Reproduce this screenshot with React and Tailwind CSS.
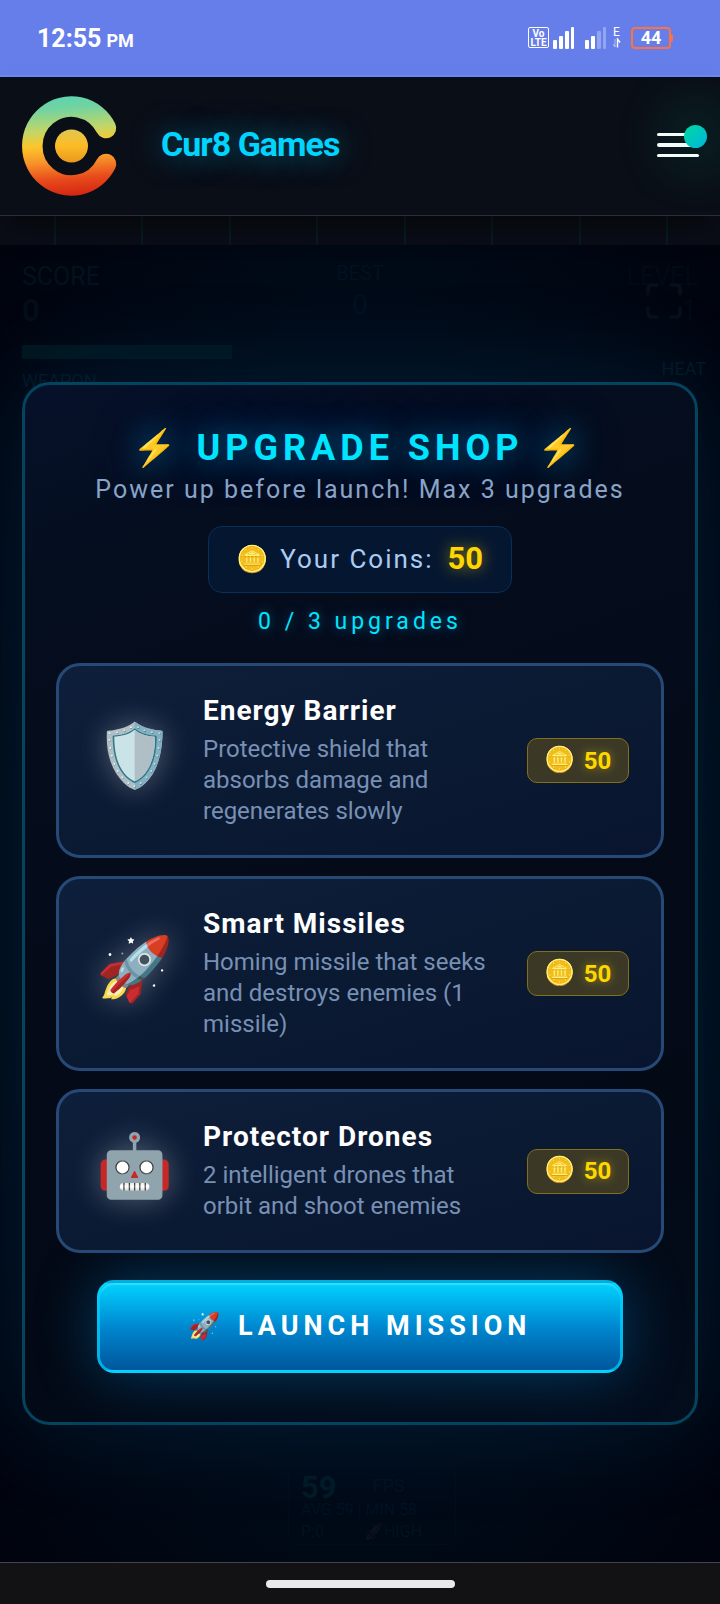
import React from "react";

const upgrades = [
  {
    icon: "🛡️",
    name: "Energy Barrier",
    description: "Protective shield that absorbs damage and regenerates slowly",
    cost: 50,
  },
  {
    icon: "🚀",
    name: "Smart Missiles",
    description: "Homing missile that seeks and destroys enemies (1 missile)",
    cost: 50,
  },
  {
    icon: "🤖",
    name: "Protector Drones",
    description: "2 intelligent drones that orbit and shoot enemies",
    cost: 50,
  },
];

function SignalBars({ strength }) {
  return (
    <svg width="22" height="22" viewBox="0 0 22 22" fill="#fff" aria-hidden="true">
      <rect x="0" y="13" width="4" height="9" rx="1" />
      <rect x="6" y="9" width="4" height="13" rx="1" />
      <rect x="12" y="4" width="4" height="18" rx="1" opacity={strength > 2 ? 1 : 0.3} />
      <rect x="18" y="0" width="3" height="22" rx="1" opacity={strength > 2 ? 1 : 0.3} />
    </svg>
  );
}

function StatusBar() {
  return (
    <div className="flex h-[77px] items-center justify-between border-b-2 border-[#6d88f2] bg-[#667eea] pr-[47px] pl-[37px] text-white">
      <div className="flex items-baseline gap-[5px] pt-[2px] font-bold">
        <span className="text-[25px] leading-8">12:55</span>
        <span className="text-lg">PM</span>
      </div>
      <div className="flex items-center">
        <div className="flex h-[21px] w-[21px] flex-col items-center justify-center rounded-[2px] border border-white text-[10px] leading-[9px] font-bold">
          <span>Vo</span>
          <span>LTE</span>
        </div>
        <div className="ml-1">
          <SignalBars strength={4} />
        </div>
        <div className="ml-[10px]">
          <SignalBars strength={2} />
        </div>
        <div className="ml-[5px] flex w-[9px] flex-col items-center">
          <span className="text-[12px] leading-[11px]">E</span>
          <svg width="9" height="10" viewBox="0 0 9 10" fill="none" stroke="#fff" aria-hidden="true">
            <path d="M3 1v8M1 6l2 3" opacity=".5" />
            <path d="M5.500 9.500V1l2.500 3.500" strokeWidth="1.400" />
          </svg>
        </div>
        <div className="ml-[10px] flex items-center">
          <div className="flex h-[22px] w-10 items-center justify-center rounded-[4px] border-2 border-[#ff7043] text-lg leading-5 font-bold">
            44
          </div>
          <div className="h-2 w-[2px] rounded-r bg-[#ff7043]" />
        </div>
      </div>
    </div>
  );
}

function Logo() {
  return (
    <svg width="100" height="104" viewBox="0 0 100 104" aria-label="Cur8 logo" role="img">
      <defs>
        <linearGradient id="ring" gradientUnits="userSpaceOnUse" x1="46" y1="2" x2="54" y2="102">
          <stop offset="0" stopColor="#5ed3b0" />
          <stop offset="0.120" stopColor="#72d3a0" />
          <stop offset="0.330" stopColor="#c3d667" />
          <stop offset="0.480" stopColor="#fcc62a" />
          <stop offset="0.640" stopColor="#f8932a" />
          <stop offset="0.820" stopColor="#e84b1c" />
          <stop offset="1" stopColor="#d42412" />
        </linearGradient>
        <linearGradient id="core" x1="0" y1="0" x2="0" y2="1">
          <stop offset="0" stopColor="#dfc850" />
          <stop offset="0.500" stopColor="#fdbb25" />
          <stop offset="1" stopColor="#e8981f" />
        </linearGradient>
      </defs>
      <path d="M84 34A39 39.500 0 1 0 84 70" fill="none" stroke="url(#ring)" strokeWidth="20.500" strokeLinecap="round" />
      <circle cx="49.500" cy="52" r="16.500" fill="url(#core)" />
    </svg>
  );
}

function Header() {
  return (
    <header className="relative z-10 flex h-[139px] items-center justify-between border-b border-[#2b2f35] bg-[#0a0e17] pr-[21px] pl-[22px] shadow-[0_16px_24px_-8px_rgba(0,0,0,0.5)]">
      <a href="#home" className="flex items-center gap-[39px]">
        <Logo />
        <span className="pb-1 text-[34px] leading-10 font-bold tracking-[-1px] text-[#00d4ff] [text-shadow:0_0_30px_rgba(0,212,255,0.5)]">
          Cur8 Games
        </span>
      </a>
      <button type="button" aria-label="Open menu" className="relative flex w-[42px] flex-col gap-[7px] pb-[2px]">
        <span className="h-[3px] w-full rounded bg-white" />
        <span className="h-1 w-full rounded bg-white" />
        <span className="h-[3px] w-full rounded bg-white" />
        <span className="absolute -top-2 -right-2 size-[23px] rounded-full bg-linear-to-br from-[#00d9a0] to-[#00b4d8] shadow-[0_0_60px_10px_rgba(0,217,165,0.3)]" />
      </button>
    </header>
  );
}

function GridStrip() {
  return (
    <div className="flex h-[29px] justify-between bg-[#0a0d16] pr-[52px] pl-[54px]">
      {[1, 2, 3, 4, 5, 6, 7, 8].map((line) => (
        <span key={line} className="w-[2px] bg-[#071a24]" />
      ))}
    </div>
  );
}

function GameHud() {
  return (
    <div className="absolute inset-0 flex flex-col justify-between text-[#03111c]" aria-hidden="true">
      <div className="px-[22px] pt-[18px]">
        <div className="grid grid-cols-3">
          <div>
            <div className="text-[25px] leading-7">SCORE</div>
            <div className="mt-[2px] text-[31px] leading-9 font-bold text-[#050d19]">0</div>
          </div>
          <div className="text-center text-[#021020]">
            <div className="text-xl leading-5">BEST</div>
            <div className="mt-1 text-[28px] leading-9">0</div>
          </div>
          <div className="relative text-right text-[#010a16]">
            <div className="text-[25px] leading-7">LEVEL</div>
            <div className="mt-[2px] text-[31px] leading-9">1</div>
            <svg className="absolute top-5 right-[16px]" width="36" height="36" viewBox="0 0 36 36" fill="none" stroke="#071019" strokeWidth="3.500" strokeLinecap="round">
              <path d="M2 11V6q0-4 4-4h5M25 2h5q4 0 4 4v5M34 25v5q0 4-4 4h-5M11 34H6q-4 0-4-4v-5" />
            </svg>
          </div>
        </div>
        <div className="mt-[16px] h-[14px] w-[210px] bg-[#00151e]" />
        <div className="-mr-2 flex justify-between text-lg leading-5 text-[#021623]">
          <span className="pt-3">WEAPON</span>
          <span>HEAT</span>
        </div>
      </div>
      <div className="mb-[17px] ml-[40%] w-[168px] rounded-lg border border-[#010d1b] px-3 pt-2 text-[#021220]">
        <div className="flex gap-9">
          <span className="text-[31px] leading-6 font-bold text-[#001a25]">59</span>
          <span className="text-lg leading-5">FPS</span>
        </div>
        <div className="text-base leading-5">AVG 59 | MIN 58</div>
        <div className="flex gap-10 text-base leading-6">
          <span>P:0</span>
          <span>
            <span className="opacity-5">🚀</span>HIGH
          </span>
        </div>
      </div>
    </div>
  );
}

function UpgradeCard({ upgrade }) {
  return (
    <button
      type="button"
      className="flex w-full items-center rounded-[24px] border-3 border-[#264a75] bg-linear-to-br from-[#0e1f3b] via-[#0b1a33] to-[#09152f] px-[32px] py-[28px] text-left"
    >
      <span className="flex w-[88px] shrink-0 justify-center pb-[10px] text-[62px] leading-[70px] [text-shadow:0_0_30px_rgba(255,255,255,0.3)]">
        {upgrade.icon}
      </span>
      <span className="ml-[24px] min-w-0 flex-1">
        <span className="block text-[28px] leading-[34px] font-bold tracking-[1px] text-white">{upgrade.name}</span>
        <span className="mt-[6px] block text-2xl leading-[31px] text-[#7890b4]">{upgrade.description}</span>
      </span>
      <span className="ml-6 flex h-[45px] w-[102px] shrink-0 items-center justify-center gap-2 rounded-[10px] border border-[#82701c] bg-[#3b3926] text-[#ffd700]">
        <span className="pb-[2px] text-[25px] leading-8">🪙</span>
        <span className="text-2xl leading-8 font-bold [text-shadow:0_0_10px_rgba(255,215,0,0.5)]">{upgrade.cost}</span>
      </span>
    </button>
  );
}

function UpgradeShop() {
  return (
    <section
      aria-labelledby="shop-title"
      className="relative rounded-[28px] border-3 border-[#03445f] bg-[linear-gradient(160deg,#06112a_0%,#050e1f_15%,#040a18_50%,#030915_75%,#030d1c_100%)] px-[31px] pt-10 pb-[49px] shadow-[0_0_100px_rgba(0,100,160,0.2)]"
    >
      <h1
        id="shop-title"
        className="text-center text-4xl leading-[46px] font-bold tracking-[5px] whitespace-nowrap text-[#00e5ff] [text-shadow:0_0_30px_rgba(0,180,255,0.6),0_0_60px_rgba(0,120,255,0.4)]"
      >
        ⚡ UPGRADE SHOP ⚡
      </h1>
      <p className="pt-[1px] text-center text-[25px] leading-[36px] tracking-[2px] text-[#88a4c8]">
        Power up before launch! Max 3 upgrades
      </p>
      <div className="mx-auto mt-[18px] flex h-[67px] w-fit items-center rounded-[14px] border border-[#06305a] bg-[#051630] px-[28px] tracking-[2px]">
        <span className="text-[26px] tracking-normal">🪙</span>
        <span className="ml-[11px] text-[26px] text-[#aaccf4]">Your Coins:</span>
        <span className="ml-[14px] text-[31px] font-bold tracking-normal text-[#ffd700] [text-shadow:0_0_15px_rgba(255,215,0,0.6)]">
          50
        </span>
      </div>
      <p className="mt-[13px] text-center text-[23px] leading-8 tracking-[4px] text-[#00e5ff] [text-shadow:0_0_12px_rgba(0,180,255,0.5)]">
        0 / 3 upgrades
      </p>
      <div className="mt-[25px] flex flex-col gap-[18px]">
        {upgrades.map((upgrade) => (
          <UpgradeCard key={upgrade.name} upgrade={upgrade} />
        ))}
      </div>
      <button
        type="button"
        className="mx-[41px] mt-[27px] flex h-[93px] w-[calc(100%-82px)] items-center justify-center gap-[17px] rounded-[17px] border-3 border-[#00d4ff]/70 bg-linear-to-b from-[#00d4ff] via-[#0088d0] to-[#00569c] text-[27px] font-bold tracking-[5px] text-white shadow-[0_0_60px_rgba(0,140,220,0.4),inset_0_2px_0_rgba(255,255,255,0.2)]"
      >
        <span className="text-[26px] tracking-normal">🚀</span>
        <span>LAUNCH MISSION</span>
      </button>
    </section>
  );
}

export default function App() {
  return (
    <div className="flex min-h-screen flex-col bg-[#00040f] font-[Roboto,'Noto_Color_Emoji',sans-serif]">
      <StatusBar />
      <Header />
      <GridStrip />
      <main className="relative flex-1 overflow-hidden bg-[radial-gradient(ellipse_at_center,#001c30_0%,#000c1a_55%,#00030d_100%)] px-[22px] pt-[137px] pb-[136px]">
        <GameHud />
        <UpgradeShop />
      </main>
      <footer className="flex h-[42px] items-center justify-center border-t border-[#454547] bg-[#121214]">
        <div className="h-2 w-[189px] rounded-full bg-[#e9e9eb]" />
      </footer>
    </div>
  );
}
